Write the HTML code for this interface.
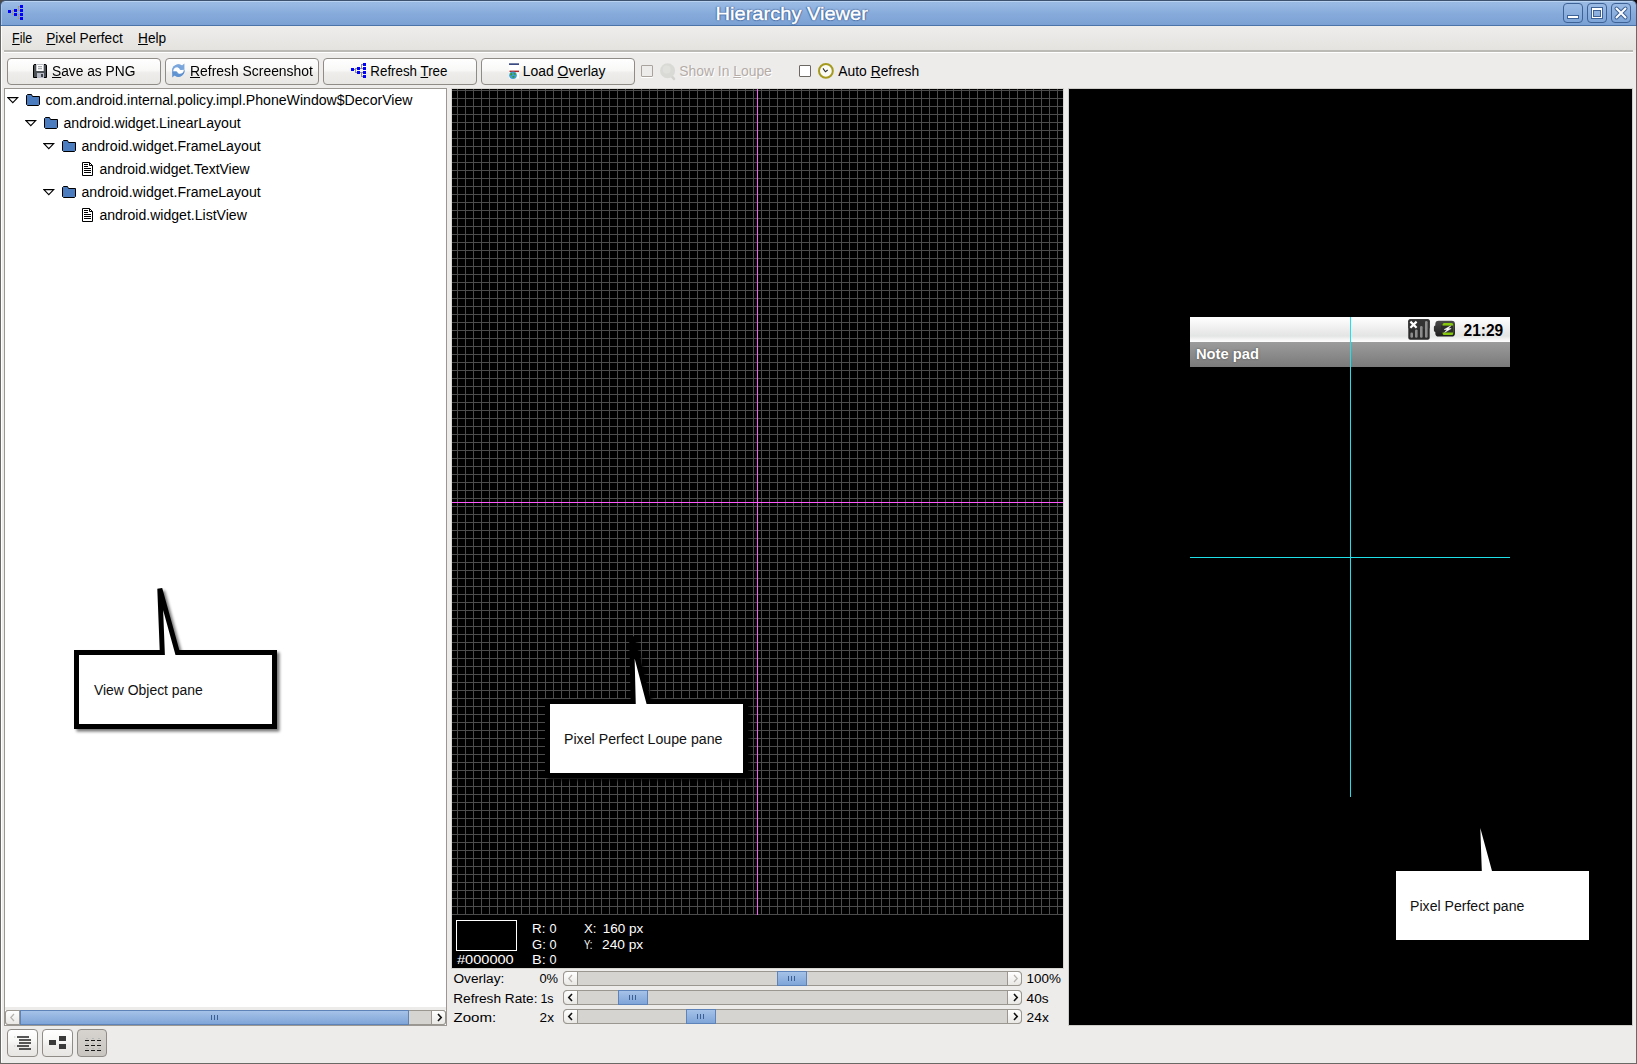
<!DOCTYPE html>
<html>
<head>
<meta charset="utf-8">
<title>Hierarchy Viewer</title>
<style>
html,body{margin:0;padding:0;}
body{width:1637px;height:1064px;overflow:hidden;background:#edeceb;position:relative;
 font-family:"Liberation Sans",sans-serif;font-size:14px;color:#000;}
.a{position:absolute;}
.t{position:absolute;white-space:pre;line-height:16px;height:16px;font-size:14px;transform-origin:0 50%;}
.s{font-size:12.5px;}
.k{font-size:14px;}
/*FIT*/
#title{transform:translate(-0.40px,1px) scaleX(1.128);}
#m1{transform:translate(0.10px,0px) scaleX(0.891);}
#m2{transform:translate(0.20px,0px) scaleX(0.975);}
#m3{transform:translate(1.00px,0px) scaleX(0.976);}
#b1{transform:translate(0.00px,0px) scaleX(0.983);}
#b2{transform:translate(0.00px,0px) scaleX(0.993);}
#b3{transform:translate(-0.65px,0px) scaleX(0.952);}
#b4{transform:translate(-0.24px,0px) scaleX(0.993);}
#c1{transform:translate(-0.69px,0px) scaleX(0.990);}
#c2{transform:translate(0.30px,0px) scaleX(0.989);}
#r0{transform:translate(-0.50px,0px) scaleX(1.007);}
#r1{transform:translate(-0.50px,0px) scaleX(1.007);}
#r2{transform:translate(-0.50px,0px) scaleX(1.010);}
#r3{transform:translate(0.40px,0px) scaleX(0.996);}
#r4{transform:translate(-0.50px,0px) scaleX(1.010);}
#r5{transform:translate(0.40px,0px) scaleX(1.004);}
#l1{transform:translate(0.00px,1px) scaleX(1.165);}
#l2{transform:translate(0.10px,1px) scaleX(1.067);}
#l3{transform:translate(0.10px,1px) scaleX(1.038);}
#l4{transform:translate(0.10px,1px) scaleX(1.164);}
#l2b{transform:translate(0.40px,1px) scaleX(1.014);}
#l3b{transform:translate(0.40px,1px) scaleX(1.014);}
#l4b{transform:translate(0.40px,1px) scaleX(1.014);}
#l5{transform:translate(0.00px,1px) scaleX(1.055);}
#l6{transform:translate(0.00px,1px) scaleX(0.764);}
#l5b{transform:translate(0.70px,1px) scaleX(1.079);}
#l6b{transform:translate(0.00px,1px) scaleX(1.097);}
#s1{transform:translate(0.50px,0px) scaleX(1.091);}
#s2{transform:translate(0.21px,1px) scaleX(1.092);}
#s3{transform:translate(0.50px,1px) scaleX(1.206);}
#s4{transform:translate(0.40px,0px) scaleX(1.033);}
#s5{transform:translate(1.40px,1px) scaleX(1.000);}
#s6{transform:translate(0.60px,1px) scaleX(1.085);}
#s7{transform:translate(0.60px,0px) scaleX(1.072);}
#s8{transform:translate(0.60px,1px) scaleX(1.090);}
#s9{transform:translate(0.60px,1px) scaleX(1.100);}
#np{transform:translate(-0.05px,1px) scaleX(1.052);}
#tm{transform:translate(0.50px,0px) scaleX(0.940);}
#k1{transform:translate(-0.10px,0px) scaleX(0.995);}
#k2{transform:translate(-0.01px,0px) scaleX(1.013);}
#k3{transform:translate(0.10px,0px) scaleX(1.005);}
/*ENDFIT*/
u{text-decoration:underline;text-underline-offset:1px;text-decoration-thickness:1px;}
/* window frame */
#tb{left:0;top:0;width:1637px;height:26px;background:linear-gradient(#9cbce5 0,#98b9e3 4px,#86abdb 14px,#7ba0d3 25px);}
#tb .top0{left:0;top:0;width:1637px;height:1px;background:#3c526f;}
#tb .top1{left:1px;top:1px;width:1635px;height:1px;background:#b9d2f1;}
#tb .bot{left:0;top:25px;width:1637px;height:1px;background:#4b74a9;}
#tb .l0{left:0;top:0;width:1px;height:26px;background:#3d5574;}
#tb .l1{left:1px;top:2px;width:1px;height:23px;background:#aac6ec;}
#tb .r0{left:1636px;top:0;width:1px;height:26px;background:#3d5574;}
#title{left:716px;top:3px;font-size:17.8px;line-height:20px;height:20px;color:#fff;-webkit-text-stroke:0.35px #fff;
 text-shadow:0 1px 1px #4a6fa5,1px 0 1px #4a6fa5,-1px 0 1px #4a6fa5,0 -1px 1px #5a7fb5;}
.wb{position:absolute;top:3px;width:18px;height:18px;border:1px solid #3e6295;border-radius:4px;
 background:linear-gradient(#9bbbe5,#7ea5d8);}
.btn{position:absolute;top:58px;height:25px;width:152px;border:1px solid #8f8b86;border-radius:4px;
 background:linear-gradient(#ffffff 0,#f8f8f7 45%,#eeedeb 55%,#e8e7e4 100%);}
.sb{position:absolute;height:13px;border:1px solid #9a9690;border-radius:4px;background:#d6d4d1;}
.sba{position:absolute;top:-1px;width:13px;height:13px;border:1px solid #9a9690;background:linear-gradient(#ffffff,#e9e8e5);}
.thumb{position:absolute;top:-1px;height:13px;border:1px solid #5d83b8;background:linear-gradient(#a5c2e8,#7fa5d8);}
.w{color:#fff;}
</style>
</head>
<body>
<!-- TITLE BAR -->
<div id="tb" class="a">
 <div class="a top0"></div><div class="a top1"></div><div class="a bot"></div>
 <div class="a l0"></div><div class="a l1"></div><div class="a r0"></div>
</div>
<div id="title" class="t">Hierarchy Viewer</div>
<!-- window buttons -->
<div class="wb" style="left:1563px"><div class="a" style="left:4px;top:12px;width:10px;height:2px;background:#fff;outline:1px solid #3e6295"></div></div>
<div class="wb" style="left:1587px"><div class="a" style="left:4px;top:4px;width:8px;height:8px;border:1px solid #fff;outline:1px solid #3e6295;box-shadow:inset 0 0 0 1px #3e6295;border-top-width:2px;height:7px"></div></div>
<div class="wb" style="left:1611px"><svg class="a" style="left:0;top:0" width="18" height="18" viewBox="0 0 18 18"><path d="M4.5 4.5L13.5 13.5M13.5 4.5L4.5 13.5" stroke="#3e6295" stroke-width="4" stroke-linecap="round"/><path d="M4.5 4.5L13.5 13.5M13.5 4.5L4.5 13.5" stroke="#fff" stroke-width="2" stroke-linecap="round"/></svg></div>
<!-- title icon -->
<svg class="a" style="left:6px;top:3px" width="18" height="18" viewBox="6 3 18 18" shape-rendering="crispEdges">
 <path d="M11 11.5H13M12.5 10V15M12.5 10.5H14M12.5 14.5H14M17 10.5H20M18.5 6V10.5M18.5 6.5H20M17 14.5H20M18.5 14.5V19M18.5 18.5H20" stroke="#a39a86" stroke-width="1" fill="none"/>
 <g fill="#0000ff"><rect x="8" y="10" width="3" height="3"/><rect x="14" y="9" width="3" height="3"/><rect x="14" y="13" width="3" height="3"/>
 <rect x="20" y="5" width="3" height="3"/><rect x="20" y="9" width="3" height="3"/><rect x="20" y="13" width="3" height="3"/><rect x="20" y="17" width="3" height="3"/></g>
</svg>

<!-- menu -->
<div class="a" style="left:2px;top:26px;width:1634px;height:24px;background:linear-gradient(#eeedec,#e4e3e0)"></div>
<div class="t" id="m1" style="left:12px;top:30px"><u>F</u>ile</div>
<div class="t" id="m2" style="left:46px;top:30px"><u>P</u>ixel Perfect</div>
<div class="t" id="m3" style="left:137px;top:30px"><u>H</u>elp</div>
<div class="a" style="left:4px;top:50px;width:1629px;height:2px;background:#bcbab5"></div>
<div class="a" style="left:4px;top:52px;width:1629px;height:1px;background:#ffffff"></div>

<!-- toolbar -->
<div class="btn" style="left:7px"></div>
<div class="btn" style="left:165px"></div>
<div class="btn" style="left:323px"></div>
<div class="btn" style="left:481px"></div>
<!-- save icon -->
<svg class="a" style="left:33px;top:64px" width="14" height="14" viewBox="0 0 14 14">
 <path d="M1.2 0.5H12.8L13.5 1.2V13.5H0.5V1.2Z" fill="#4b5155" stroke="#000" stroke-width="1"/>
 <rect x="3" y="0" width="8" height="7" fill="#fff"/><rect x="3" y="0" width="8" height="1" fill="#b8bcc0"/>
 <rect x="3" y="0" width="1" height="7" fill="#c8cccf"/><rect x="10" y="0" width="1" height="7" fill="#c8cccf"/>
 <rect x="5" y="2.3" width="4" height="0.9" fill="#888c90"/><rect x="5" y="4.3" width="4" height="0.9" fill="#888c90"/>
 <rect x="4" y="9" width="7" height="5" fill="#b9bcc6"/><rect x="8" y="10" width="2" height="3" fill="#3c4246"/>
</svg>
<div class="t" id="b1" style="left:52px;top:63px"><u>S</u>ave as PNG</div>
<!-- refresh icon -->
<svg class="a" style="left:171px;top:63px" width="15" height="15" viewBox="0 0 15 15">
 <circle cx="7.3" cy="7.7" r="6.2" fill="#6f9fd8"/>
 <path d="M1 8 A6.3 6.3 0 0 1 11 2.6 L13.4 0.6 L13.4 6.6 L7.6 6.6 L9.6 4.4 A4 4 0 0 0 3.6 8Z" fill="#7ba6dc"/>
 <path d="M13.6 7.6 A6.3 6.3 0 0 1 3.6 12.6 L1.2 14.4 L1.2 8.6 L7 8.6 L5.2 10.8 A4 4 0 0 0 11 7.6Z" fill="#5f92d0"/>
 <path d="M2.2 8.2 C2.4 5.6 4.6 4.0 6.8 4.4 C8.8 4.8 8.2 6.8 10 7 L12.9 6.8 C12.8 9.6 10.6 11.2 8.2 10.8 C6.4 10.4 6.8 8.4 5.2 8.2 Z" fill="#fff"/>
</svg>
<div class="t" id="b2" style="left:190px;top:63px"><u>R</u>efresh Screenshot</div>
<!-- tree icon -->
<svg class="a" style="left:349px;top:61px" width="18" height="18" viewBox="349 61 18 18" shape-rendering="crispEdges">
 <path d="M354 69.5H356M355.5 68V73M355.5 68.5H357M355.5 72.5H357M360 68.5H363M361.5 64V68.5M361.5 64.5H363M360 72.5H363M361.5 72.5V77M361.5 76.5H363" stroke="#8e8e8e" stroke-width="1" fill="none"/>
 <g fill="#0000ff"><rect x="351" y="68" width="3" height="3"/><rect x="357" y="67" width="3" height="3"/><rect x="357" y="71" width="3" height="3"/>
 <rect x="363" y="63" width="3" height="3"/><rect x="363" y="67" width="3" height="3"/><rect x="363" y="71" width="3" height="3"/><rect x="363" y="75" width="3" height="3"/></g>
</svg>
<div class="t" id="b3" style="left:371px;top:63px">Refresh <u>T</u>ree</div>
<!-- overlay icon -->
<svg class="a" style="left:508px;top:62px" width="12" height="18" viewBox="0 0 12 18">
 <rect x="1" y="1" width="10" height="15.5" fill="#fff"/>
 <rect x="1" y="1.3" width="10" height="1.7" fill="#3b4a82"/>
 <rect x="1.5" y="8.6" width="9.5" height="1.5" fill="#b32424"/>
 <circle cx="5" cy="13.3" r="3.8" fill="#3f9ed6"/>
 <path d="M2.2 12 L3.6 10.6 L4.4 12.4 L3 14Z M5.4 10.6 L7.6 11.4 L7.4 13 L5.8 12.6Z M4.4 14.2 L6.6 13.8 L6.4 15.6 L4.8 16Z" fill="#3c9a1e"/>
</svg>
<div class="t" id="b4" style="left:523px;top:63px">Load <u>O</u>verlay</div>
<!-- show in loupe -->
<div class="a" style="left:641px;top:65px;width:10px;height:10px;border:1px solid #a8a39d;border-radius:1px;background:#edeceb;box-shadow:0 1px 0 #fff"></div>
<svg class="a" style="left:658px;top:62px" width="20" height="20" viewBox="0 0 20 20">
 <path d="M13.5 14 L16 16.8" stroke="#d3d2cf" stroke-width="2.6" stroke-linecap="round"/>
 <circle cx="9.6" cy="8.7" r="7.5" fill="#d9d9d6"/><circle cx="8.6" cy="7.6" r="4" fill="#e0e0dd"/>
</svg>
<div class="t" id="c1" style="left:680px;top:63px;color:#b4aca7;text-shadow:1px 1px 0 #fff">Show In <u>L</u>oupe</div>
<!-- auto refresh -->
<div class="a" style="left:799px;top:65px;width:10px;height:10px;border:1px solid #6b6762;border-radius:1px;background:#fff;"></div>
<svg class="a" style="left:817px;top:62px" width="18" height="18" viewBox="0 0 18 18">
 <circle cx="8.9" cy="8.9" r="6.9" fill="#fbfbf6" stroke="#a59a1e" stroke-width="2"/>
 <path d="M6 6.4 L8.4 9.7 L10.7 8" stroke="#2a2a2a" stroke-width="1.1" fill="none"/>
</svg>
<div class="t" id="c2" style="left:838px;top:63px">Auto <u>R</u>efresh</div>

<!-- tree pane -->
<div class="a" style="left:4px;top:88px;width:441px;height:936px;border:1px solid #9b9792;background:#fff"></div>
<div class="a" style="left:5px;top:1007px;width:441px;height:3px;background:#edeceb"></div>
<svg class="a" style="left:7px;top:97px" width="12" height="7" viewBox="0 0 12 7"><path d="M0.9 0.6H10.7L5.8 5.7Z" fill="#fff" stroke="#000" stroke-width="1.1" stroke-linejoin="miter"/></svg>
<svg class="a" style="left:26px;top:94px" width="14" height="12" viewBox="0 0 14 12"><path d="M1.5 0.5H5.5L6.5 2.5H13.5V10.5L12.5 11.5H1.5L0.5 10.5V1.5Z" fill="#4b7cc0" stroke="#000" stroke-width="1"/></svg>
<div class="t" id="r0" style="left:45.5px;top:92px">com.android.internal.policy.impl.PhoneWindow$DecorView</div>
<svg class="a" style="left:25px;top:120px" width="12" height="7" viewBox="0 0 12 7"><path d="M0.9 0.6H10.7L5.8 5.7Z" fill="#fff" stroke="#000" stroke-width="1.1" stroke-linejoin="miter"/></svg>
<svg class="a" style="left:44px;top:117px" width="14" height="12" viewBox="0 0 14 12"><path d="M1.5 0.5H5.5L6.5 2.5H13.5V10.5L12.5 11.5H1.5L0.5 10.5V1.5Z" fill="#4b7cc0" stroke="#000" stroke-width="1"/></svg>
<div class="t" id="r1" style="left:63.5px;top:115px">android.widget.LinearLayout</div>
<svg class="a" style="left:43px;top:143px" width="12" height="7" viewBox="0 0 12 7"><path d="M0.9 0.6H10.7L5.8 5.7Z" fill="#fff" stroke="#000" stroke-width="1.1" stroke-linejoin="miter"/></svg>
<svg class="a" style="left:62px;top:140px" width="14" height="12" viewBox="0 0 14 12"><path d="M1.5 0.5H5.5L6.5 2.5H13.5V10.5L12.5 11.5H1.5L0.5 10.5V1.5Z" fill="#4b7cc0" stroke="#000" stroke-width="1"/></svg>
<div class="t" id="r2" style="left:81.5px;top:138px">android.widget.FrameLayout</div>
<svg class="a" style="left:82px;top:162px" width="11" height="14" viewBox="0 0 11 14"><path d="M0.5 0.5H7.5L10.5 3.5V13.5H0.5Z" fill="#fff" stroke="#000" stroke-width="1"/><path d="M7.5 0.5V3.5H10.5" fill="none" stroke="#000" stroke-width="1"/><path d="M2 2.5H6M2 4.5H6M2 6.5H9M2 8.5H9M2 10.5H9" stroke="#000" stroke-width="1"/></svg>
<div class="t" id="r3" style="left:99.4px;top:161px">android.widget.TextView</div>
<svg class="a" style="left:43px;top:189px" width="12" height="7" viewBox="0 0 12 7"><path d="M0.9 0.6H10.7L5.8 5.7Z" fill="#fff" stroke="#000" stroke-width="1.1" stroke-linejoin="miter"/></svg>
<svg class="a" style="left:62px;top:186px" width="14" height="12" viewBox="0 0 14 12"><path d="M1.5 0.5H5.5L6.5 2.5H13.5V10.5L12.5 11.5H1.5L0.5 10.5V1.5Z" fill="#4b7cc0" stroke="#000" stroke-width="1"/></svg>
<div class="t" id="r4" style="left:81.5px;top:184px">android.widget.FrameLayout</div>
<svg class="a" style="left:82px;top:208px" width="11" height="14" viewBox="0 0 11 14"><path d="M0.5 0.5H7.5L10.5 3.5V13.5H0.5Z" fill="#fff" stroke="#000" stroke-width="1"/><path d="M7.5 0.5V3.5H10.5" fill="none" stroke="#000" stroke-width="1"/><path d="M2 2.5H6M2 4.5H6M2 6.5H9M2 8.5H9M2 10.5H9" stroke="#000" stroke-width="1"/></svg>
<div class="t" id="r5" style="left:99.4px;top:207px">android.widget.ListView</div>
<div class="sb" style="left:5px;top:1010px;width:439px;border-radius:3px">
 <div class="sba" style="left:-1px;border-radius:3px 0 0 3px"><svg class="a" style="left:3px;top:2px" width="7" height="9" viewBox="0 0 7 9"><path d="M5 1L1.8 4.5L5 8" fill="none" stroke="#b5b2ad" stroke-width="1.2"/></svg></div>
 <div class="thumb" style="left:14px;width:387px"><div class="a" style="left:190px;top:4px;width:1px;height:5px;background:#3a5f94;box-shadow:3px 0 0 #3a5f94,6px 0 0 #3a5f94"></div></div>
 <div class="sba" style="left:425px;border-radius:0 3px 3px 0"><svg class="a" style="left:4px;top:2px" width="7" height="9" viewBox="0 0 7 9"><path d="M2 1L5.2 4.5L2 8" fill="none" stroke="#111" stroke-width="1.6"/></svg></div>
</div>
<div class="a" style="left:7px;top:1029px;width:29px;height:26px;border:1px solid #8f8b86;border-radius:4px;background:linear-gradient(#ffffff 0,#f8f8f7 40%,#eeedeb 62%,#e7e6e3 100%)"><svg class="a" style="left:6px;top:6px" width="18" height="15" viewBox="0 0 18 15"><path d="M3 1H15M5 4H17M5 7H17M3 10H15M5 13H17" stroke="#222" stroke-width="1.7"/><rect x="0" y="0.3" width="1.4" height="1.4" fill="#d8d6d3"/><rect x="0" y="9.3" width="1.4" height="1.4" fill="#d8d6d3"/></svg></div>
<div class="a" style="left:42px;top:1029px;width:29px;height:26px;border:1px solid #8f8b86;border-radius:4px;background:linear-gradient(#ffffff 0,#f8f8f7 40%,#eeedeb 62%,#e7e6e3 100%)"><svg class="a" style="left:6px;top:5px" width="18" height="15" viewBox="0 0 18 15"><rect x="0" y="5" width="7" height="5" fill="#3a3a3a"/><rect x="10" y="1" width="7" height="5" fill="#3a3a3a"/><rect x="10" y="9" width="7" height="5" fill="#3a3a3a"/></svg></div>
<div class="a" style="left:77px;top:1029px;width:28px;height:26px;border:1px solid #8f8b86;border-radius:4px;background:linear-gradient(#d7d4d0,#c9c6c1)"><svg class="a" style="left:6px;top:7px" width="18" height="15" viewBox="0 0 18 15"><path d="M1 3.5H5M7 3.5H11M13 3.5H17M1 8.5H5M7 8.5H11M13 8.5H17M1 13.5H5M7 13.5H11M13 13.5H17" stroke="#1a1a1a" stroke-width="1.2"/><path d="M2 1.5H4M8 1.5H10M14 1.5H16M2 6.5H4M8 6.5H10M14 6.5H16M2 11.5H4M8 11.5H10M14 11.5H16" stroke="#b7b9b9" stroke-width="1"/></svg></div>

<!-- loupe pane -->
<div class="a" style="left:451px;top:88px;width:613px;height:881px;background:#d6d4d1"></div>
<div class="a" style="left:452px;top:89px;width:611px;height:879px;background:#000"></div>
<div class="a" style="left:452px;top:89px;width:611px;height:826px;
 background-image:linear-gradient(to right,#4c4c4c 1px,transparent 1px),linear-gradient(to bottom,#4c4c4c 1px,transparent 1px);
 background-size:8px 8px;background-position:5px 1px;"></div>
<div class="a" style="left:757px;top:89px;width:1px;height:826px;background:#ff58ff"></div>
<div class="a" style="left:452px;top:502px;width:611px;height:1px;background:#ff58ff"></div>
<div class="a" style="left:456px;top:920px;width:59px;height:29px;border:1px solid #fff"></div>
<div class="t s w" id="l1" style="left:457px;top:951px">#000000</div>
<div class="t s w" id="l2" style="left:532px;top:920px">R:</div>
<div class="t s w" id="l3" style="left:532px;top:936px">G:</div>
<div class="t s w" id="l4" style="left:532px;top:951px">B:</div>
<div class="t s w" id="l2b" style="left:549px;top:920px">0</div>
<div class="t s w" id="l3b" style="left:549px;top:936px">0</div>
<div class="t s w" id="l4b" style="left:549px;top:951px">0</div>
<div class="t s w" id="l5" style="left:584px;top:920px">X:</div>
<div class="t s w" id="l6" style="left:584px;top:936px">Y:</div>
<div class="t s w" id="l5b" style="left:602px;top:920px">160 px</div>
<div class="t s w" id="l6b" style="left:602px;top:936px">240 px</div>
<div class="t s" id="s1" style="left:453px;top:971px">Overlay:</div>
<div class="t s" id="s2" style="left:453px;top:990px">Refresh Rate:</div>
<div class="t s" id="s3" style="left:453px;top:1009px">Zoom:</div>
<div class="t s" id="s4" style="left:539px;top:971px">0%</div>
<div class="t s" id="s5" style="left:539px;top:990px">1s</div>
<div class="t s" id="s6" style="left:539px;top:1009px">2x</div>
<div class="t s" id="s7" style="left:1026px;top:971px">100%</div>
<div class="t s" id="s8" style="left:1026px;top:990px">40s</div>
<div class="t s" id="s9" style="left:1026px;top:1009px">24x</div>
<div class="sb" style="left:563px;top:971px;width:457px">
 <div class="sba" style="left:-1px;border-radius:4px 0 0 4px"><svg class="a" style="left:3px;top:2px" width="7" height="9" viewBox="0 0 7 9"><path d="M5 1L1.8 4.5L5 8" fill="none" stroke="#b5b2ad" stroke-width="1.2"/></svg></div>
 <div class="thumb" style="left:213px;width:28px"><div class="a" style="left:10px;top:4px;width:1px;height:5px;background:#3a5f94;box-shadow:3px 0 0 #3a5f94,6px 0 0 #3a5f94"></div></div>
 <div class="sba" style="left:443px;border-radius:0 4px 4px 0"><svg class="a" style="left:4px;top:2px" width="7" height="9" viewBox="0 0 7 9"><path d="M2 1L5.2 4.5L2 8" fill="none" stroke="#b5b2ad" stroke-width="1.2"/></svg></div>
</div>
<div class="sb" style="left:563px;top:990px;width:457px">
 <div class="sba" style="left:-1px;border-radius:4px 0 0 4px"><svg class="a" style="left:3px;top:2px" width="7" height="9" viewBox="0 0 7 9"><path d="M5 1L1.8 4.5L5 8" fill="none" stroke="#111" stroke-width="1.6"/></svg></div>
 <div class="thumb" style="left:54px;width:28px"><div class="a" style="left:10px;top:4px;width:1px;height:5px;background:#3a5f94;box-shadow:3px 0 0 #3a5f94,6px 0 0 #3a5f94"></div></div>
 <div class="sba" style="left:443px;border-radius:0 4px 4px 0"><svg class="a" style="left:4px;top:2px" width="7" height="9" viewBox="0 0 7 9"><path d="M2 1L5.2 4.5L2 8" fill="none" stroke="#111" stroke-width="1.6"/></svg></div>
</div>
<div class="sb" style="left:563px;top:1009px;width:457px">
 <div class="sba" style="left:-1px;border-radius:4px 0 0 4px"><svg class="a" style="left:3px;top:2px" width="7" height="9" viewBox="0 0 7 9"><path d="M5 1L1.8 4.5L5 8" fill="none" stroke="#111" stroke-width="1.6"/></svg></div>
 <div class="thumb" style="left:122px;width:28px"><div class="a" style="left:10px;top:4px;width:1px;height:5px;background:#3a5f94;box-shadow:3px 0 0 #3a5f94,6px 0 0 #3a5f94"></div></div>
 <div class="sba" style="left:443px;border-radius:0 4px 4px 0"><svg class="a" style="left:4px;top:2px" width="7" height="9" viewBox="0 0 7 9"><path d="M2 1L5.2 4.5L2 8" fill="none" stroke="#111" stroke-width="1.6"/></svg></div>
</div>

<!-- pixel perfect pane -->
<div class="a" style="left:1068px;top:88px;width:565px;height:938px;background:#cfcdc9"></div>
<div class="a" style="left:1069px;top:89px;width:563px;height:936px;background:#000"></div>
<div class="a" style="left:1190px;top:317px;width:320px;height:25px;background:linear-gradient(#ffffff 0,#fbfbfb 12%,#ededed 50%,#e3e4e4 76%,#f3f3f3 88%,#ffffff 100%)"></div>
<div class="a" style="left:1190px;top:342px;width:320px;height:25px;background:linear-gradient(#9c9c9c 0,#8b8b8b 50%,#7a7a7a 100%)"></div>
<div class="t" id="np" style="left:1196px;top:345px;font-weight:bold;font-size:14px;color:#fff;text-shadow:0 0 2px #444">Note pad</div>
<div class="t" id="tm" style="left:1463px;top:321px;font-weight:bold;font-size:16.5px;line-height:18px;height:18px;color:#000">21:29</div>
<!-- signal icon -->
<svg class="a" style="left:1408px;top:319px" width="22" height="21" viewBox="0 0 22 21">
 <rect x="0.3" y="0.3" width="21.4" height="20.4" rx="2" fill="#2b2b2b"/>
 <rect x="0.3" y="0.3" width="21.4" height="10" rx="2" fill="#333"/>
 <rect x="2.4" y="13.6" width="2.6" height="5.2" rx="1.2" fill="#8c8c8c"/>
 <rect x="7" y="10.4" width="2.6" height="8.4" rx="1.2" fill="#8c8c8c"/>
 <rect x="12" y="7" width="2.6" height="11.8" rx="1.2" fill="#8c8c8c"/>
 <rect x="17" y="2" width="2.6" height="16.8" rx="1.2" fill="#8c8c8c"/>
 <path d="M2.4 2.6L8.6 8.8M8.6 2.6L2.4 8.8" stroke="#fff" stroke-width="2.2"/>
</svg>
<!-- battery icon -->
<svg class="a" style="left:1433px;top:320px" width="23" height="18" viewBox="0 0 23 18">
 <defs><linearGradient id="bg1" x1="0" y1="0" x2="0" y2="1"><stop offset="0" stop-color="#4a4a4a"/><stop offset="1" stop-color="#1c1c1c"/></linearGradient></defs>
 <path d="M0.9 7Q0.9 5.6 2.3 5.4V4.2Q2.3 0.8 5.7 0.8H18.6Q22 0.8 22 4.2V13.2Q22 16.6 18.6 16.6H5.7Q2.3 16.6 2.3 13.2V12Q0.9 11.8 0.9 10.4Z" fill="url(#bg1)"/>
 <rect x="9.6" y="3" width="10.6" height="12" rx="1.6" fill="#84c70c"/>
 <rect x="8" y="5.6" width="12" height="6.9" fill="#2c2c2c"/>
 <path d="M17.8 5.8L11.2 9.5H14.2L11.6 12.4L18.2 8.6H15.2Z" fill="#fff" stroke="#fff" stroke-width="0.5" stroke-linejoin="round"/>
</svg>
<div class="a" style="left:1350px;top:317px;width:1px;height:480px;background:#1fe0e8"></div>
<div class="a" style="left:1190px;top:557px;width:320px;height:1px;background:#1fe0e8"></div>

<!-- callouts -->
<svg class="a" style="left:60px;top:570px;overflow:visible" width="240" height="180" viewBox="60 570 240 180">
 <defs><filter id="sh" x="-10%" y="-10%" width="130%" height="130%"><feGaussianBlur stdDeviation="1.6"/></filter></defs>
 <path d="M76.5 652.5H162.3L159.8 588.6L177.4 652.5H274.5V726.5H76.5Z" fill="#000" stroke="#000" stroke-width="5" stroke-linejoin="miter" opacity="0.55" filter="url(#sh)" transform="translate(2.5,2.5)"/>
 <path d="M76.5 652.5H162.3L159.8 588.6L177.4 652.5H274.5V726.5H76.5Z" fill="#fff" stroke="#000" stroke-width="5" stroke-linejoin="miter" stroke-miterlimit="3"/>
</svg>
<div class="t k" id="k1" style="left:93.5px;top:682px;color:#111">View Object pane</div>
<svg class="a" style="left:530px;top:620px;overflow:visible" width="240" height="180" viewBox="530 620 240 180">
 <path d="M547.5 701.5H633.2L631.6 637L648.5 701.5H745.5V775.5H547.5Z" fill="#000" stroke="#000" stroke-width="5" stroke-linejoin="miter" stroke-miterlimit="3" opacity="0.75" filter="url(#sh)" transform="translate(2.5,2.5)"/>
 <path d="M547.5 701.5H633.2L631.6 637L648.5 701.5H745.5V775.5H547.5Z" fill="#fff" stroke="#000" stroke-width="5" stroke-linejoin="miter" stroke-miterlimit="3"/>
</svg>
<div class="t k" id="k2" style="left:564.4px;top:731px;color:#111">Pixel Perfect Loupe pane</div>
<svg class="a" style="left:1380px;top:800px" width="240" height="180" viewBox="1380 800 240 180">
 <path d="M1396 871H1481.8L1480.3 828L1492 871H1589V940H1396Z" fill="#fff"/>
</svg>
<div class="t k" id="k3" style="left:1410.4px;top:898px;color:#111">Pixel Perfect pane</div>

<!-- window frame -->
<div class="a" style="left:0;top:26px;width:1px;height:1038px;background:#6b6965"></div>
<div class="a" style="left:1px;top:26px;width:1px;height:1036px;background:#fff"></div>
<div class="a" style="left:1636px;top:26px;width:1px;height:1038px;background:#6b6965"></div>
<div class="a" style="left:0;top:1063px;width:1637px;height:1px;background:#6b6965"></div>
<svg class="a" style="left:0;top:0" width="6" height="6" viewBox="0 0 6 6"><path d="M0 0H5L3 1L1 3L0 5Z" fill="#4b4b4b"/><path d="M5 0.5L3 1.2L1.2 3L0.5 5" fill="none" stroke="#3d5574" stroke-width="1"/></svg>
<svg class="a" style="left:1631px;top:0" width="6" height="6" viewBox="0 0 6 6"><path d="M6 0H1L3 1L5 3L6 5Z" fill="#0c0c0c"/><path d="M1 0.5L3 1.2L4.8 3L5.5 5" fill="none" stroke="#3d5574" stroke-width="1"/></svg>
</body>
</html>
